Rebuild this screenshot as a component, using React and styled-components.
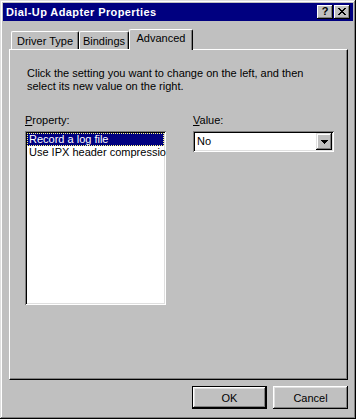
import React from "react";
import styled, { createGlobalStyle } from "styled-components";

const GlobalStyle = createGlobalStyle`
  html, body {
    margin: 0;
    padding: 0;
    background: #c0c0c0;
  }
  body {
    font-family: "Liberation Sans", Arial, sans-serif;
    font-size: 11px;
    color: #000;
  }
`;

const Window = styled.div`
  width: 356px;
  height: 419px;
  box-sizing: border-box;
  padding: 3px;
  background: #c0c0c0;
  box-shadow: inset -1px -1px #000, inset 1px 1px #dfdfdf,
    inset -2px -2px #808080, inset 2px 2px #fff;
  display: flex;
  flex-direction: column;
`;

const TitleBar = styled.div`
  height: 18px;
  background: #000080;
  display: flex;
  align-items: center;
  justify-content: space-between;
  padding: 0 3px 0 3px;
`;

const Title = styled.span`
  color: #fff;
  font-weight: bold;
  font-size: 11px;
  letter-spacing: 0.4px;
`;

const CaptionButtons = styled.div`
  display: flex;
  gap: 1px;
`;

const CaptionButton = styled.div`
  width: 16px;
  height: 14px;
  box-sizing: border-box;
  background: #c0c0c0;
  box-shadow: inset -1px -1px #000, inset 1px 1px #fff,
    inset -2px -2px #808080;
  display: flex;
  align-items: center;
  justify-content: center;
  font-weight: bold;
  font-size: 11px;
  line-height: 1;
  padding-bottom: 1px;
`;

const Body = styled.div`
  display: flex;
  flex-direction: column;
  padding: 8px 5px 0 6px;
`;

const TabRow = styled.div`
  display: flex;
  align-items: flex-end;
  height: 20px;
  padding-left: 2px;
  position: relative;
  z-index: 1;
`;

const Tab = styled.div`
  width: ${(p) => p.$width}px;
  height: ${(p) => (p.$active ? 21 : 18)}px;
  margin-bottom: ${(p) => (p.$active ? -1 : 0)}px;
  box-sizing: border-box;
  background: #c0c0c0;
  border-top: 1px solid #fff;
  border-left: 1px solid #fff;
  border-right: 1px solid #000;
  border-radius: 2px 2px 0 0;
  box-shadow: inset -1px 0 #808080;
  display: flex;
  justify-content: center;
  padding-top: ${(p) => (p.$active ? 2 : 3)}px;
  line-height: 13px;
`;

const Panel = styled.div`
  height: 331px;
  box-sizing: border-box;
  background: #c0c0c0;
  border-top: 1px solid #fff;
  border-left: 1px solid #fff;
  border-right: 1px solid #000;
  border-bottom: 1px solid #000;
  box-shadow: inset -1px -1px #808080;
  padding: 17px 15px 0 15px;
`;

const Intro = styled.p`
  margin: 0;
  padding-left: 2px;
  line-height: 13px;
  width: 290px;
`;

const Columns = styled.div`
  display: grid;
  grid-template-columns: 141px 141px;
  column-gap: 27px;
  margin-top: 21px;
`;

const Field = styled.div`
  display: flex;
  flex-direction: column;
`;

const Label = styled.label`
  line-height: 13px;
  margin-bottom: 4px;
  u {
    text-decoration: underline;
    text-underline-offset: 1px;
  }
`;

const ListBox = styled.div`
  height: 174px;
  box-sizing: border-box;
  background: #fff;
  box-shadow: inset 1px 1px #808080, inset -1px -1px #fff,
    inset 2px 2px #000, inset -2px -2px #dfdfdf;
  padding: 2px;
  overflow: hidden;
`;

const ListItem = styled.div`
  height: 13px;
  line-height: 13px;
  padding-left: 2px;
  white-space: nowrap;
  background: ${(p) => (p.$selected ? "#000080" : "transparent")};
  color: ${(p) => (p.$selected ? "#fff" : "#000")};
  outline: ${(p) => (p.$selected ? "1px dotted #ffff80" : "none")};
  outline-offset: -1px;
`;

const Combo = styled.div`
  height: 21px;
  box-sizing: border-box;
  background: #fff;
  box-shadow: inset 1px 1px #808080, inset -1px -1px #fff,
    inset 2px 2px #000, inset -2px -2px #dfdfdf;
  padding: 2px;
  display: flex;
  align-items: center;
  justify-content: space-between;
`;

const ComboValue = styled.span`
  padding-left: 2px;
  line-height: 13px;
`;

const DropButton = styled.div`
  width: 16px;
  height: 17px;
  box-sizing: border-box;
  background: #c0c0c0;
  box-shadow: inset -1px -1px #000, inset 1px 1px #dfdfdf,
    inset -2px -2px #808080, inset 2px 2px #fff;
  display: flex;
  align-items: center;
  justify-content: center;
`;

const ButtonRow = styled.div`
  display: flex;
  justify-content: flex-end;
  gap: 6px;
  margin-top: 6px;
`;

const Button = styled.div`
  width: 75px;
  height: 23px;
  box-sizing: border-box;
  background: #c0c0c0;
  display: flex;
  align-items: center;
  justify-content: center;
  border: ${(p) => (p.$default ? "1px solid #000" : "none")};
  box-shadow: inset -1px -1px #000, inset 1px 1px #fff,
    inset -2px -2px #808080, inset 2px 2px #dfdfdf;
`;

function CloseGlyph() {
  return (
    <svg width="8" height="7" viewBox="0 0 8 7" shapeRendering="crispEdges">
      <path
        d="M0 0h2v1h-2zM6 0h2v1h-2zM1 1h2v1h-2zM5 1h2v1h-2zM2 2h4v1h-4zM3 3h2v1h-2zM2 4h4v1h-4zM1 5h2v1h-2zM5 5h2v1h-2zM0 6h2v1h-2zM6 6h2v1h-2z"
        fill="#000"
      />
    </svg>
  );
}

function ArrowGlyph() {
  return (
    <svg width="7" height="4" viewBox="0 0 7 4" shapeRendering="crispEdges">
      <path d="M0 0h7v1h-7zM1 1h5v1h-5zM2 2h3v1h-3zM3 3h1v1h-1z" fill="#000" />
    </svg>
  );
}

export default function App() {
  return (
    <>
      <GlobalStyle />
      <Window>
        <TitleBar>
          <Title>Dial-Up Adapter Properties</Title>
          <CaptionButtons>
            <CaptionButton>?</CaptionButton>
            <CaptionButton>
              <CloseGlyph />
            </CaptionButton>
          </CaptionButtons>
        </TitleBar>
        <Body>
          <TabRow>
            <Tab $width={68}>Driver Type</Tab>
            <Tab $width={50}>Bindings</Tab>
            <Tab $width={64} $active>
              Advanced
            </Tab>
          </TabRow>
          <Panel>
            <Intro>
              Click the setting you want to change on the left, and then
              select its new value on the right.
            </Intro>
            <Columns>
              <Field>
                <Label>
                  <u>P</u>roperty:
                </Label>
                <ListBox>
                  <ListItem $selected>Record a log file</ListItem>
                  <ListItem>Use IPX header compression</ListItem>
                </ListBox>
              </Field>
              <Field>
                <Label>
                  <u>V</u>alue:
                </Label>
                <Combo>
                  <ComboValue>No</ComboValue>
                  <DropButton>
                    <ArrowGlyph />
                  </DropButton>
                </Combo>
              </Field>
            </Columns>
          </Panel>
          <ButtonRow>
            <Button $default>OK</Button>
            <Button>Cancel</Button>
          </ButtonRow>
        </Body>
      </Window>
    </>
  );
}
